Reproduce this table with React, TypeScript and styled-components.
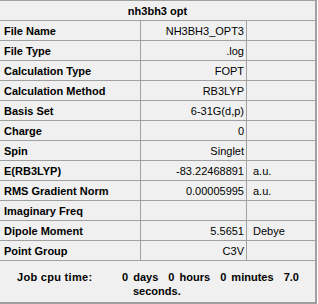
import React from 'react';
import styled, { createGlobalStyle } from 'styled-components';

const GlobalStyle = createGlobalStyle`
  html, body {
    margin: 0;
    padding: 0;
    background: #ffffff;
  }
  body {
    font-family: "Liberation Sans", Arial, sans-serif;
    font-size: 11px;
    color: #000000;
  }
`;

const Panel = styled.div`
  width: 317px;
  height: 304px;
  box-sizing: border-box;
  background: #f0f0f0;
  border-top: 1px solid #a0a0a0;
  border-right: 2px solid #a0a0a0;
  border-bottom: 2px solid #a0a0a0;
  display: flex;
  flex-direction: column;
`;

const Title = styled.div`
  height: 19px;
  border-bottom: 1px solid #a0a0a0;
  display: flex;
  align-items: center;
  justify-content: center;
  font-weight: bold;
`;

const Row = styled.div`
  display: grid;
  grid-template-columns: 141px 106px 1fr;
  height: 20px;
  box-sizing: border-box;
  border-bottom: 1px solid #a0a0a0;
`;

const Cell = styled.div<{ $align?: 'left' | 'right'; $bold?: boolean; $last?: boolean }>`
  display: flex;
  align-items: center;
  justify-content: ${(p) => (p.$align === 'right' ? 'flex-end' : 'flex-start')};
  padding: ${(p) => (p.$align === 'right' ? '0 2px 0 0' : p.$bold ? '0 0 0 4px' : '0 0 0 6px')};
  font-weight: ${(p) => (p.$bold ? 'bold' : 'normal')};
  border-right: ${(p) => (p.$last ? 'none' : '1px solid #a0a0a0')};
  white-space: nowrap;
  overflow: hidden;
`;

const Footer = styled.div`
  flex: 1;
  display: flex;
  font-weight: bold;
  padding-top: 9px;
  line-height: 14px;
`;

const FooterLabel = styled.div`
  width: 122px;
  padding-left: 17px;
  box-sizing: border-box;
  letter-spacing: 0.3px;
`;

const FooterValue = styled.div`
  display: flex;
  flex-direction: column;
  white-space: pre;
  word-spacing: 2px;
`;

const Wrapped = styled.span`
  padding-left: 11px;
`;

type Prop = { label: string; value: string; unit?: string };

const rows: Prop[] = [
  { label: 'File Name', value: 'NH3BH3_OPT3' },
  { label: 'File Type', value: '.log' },
  { label: 'Calculation Type', value: 'FOPT' },
  { label: 'Calculation Method', value: 'RB3LYP' },
  { label: 'Basis Set', value: '6-31G(d,p)' },
  { label: 'Charge', value: '0' },
  { label: 'Spin', value: 'Singlet' },
  { label: 'E(RB3LYP)', value: '-83.22468891', unit: 'a.u.' },
  { label: 'RMS Gradient Norm', value: '0.00005995', unit: 'a.u.' },
  { label: 'Imaginary Freq', value: '' },
  { label: 'Dipole Moment', value: '5.5651', unit: 'Debye' },
  { label: 'Point Group', value: 'C3V' },
];

export default function App() {
  return (
    <>
      <GlobalStyle />
      <Panel>
        <Title>nh3bh3 opt</Title>
        {rows.map((r) => (
          <Row key={r.label}>
            <Cell $bold>{r.label}</Cell>
            <Cell $align="right">{r.value}</Cell>
            <Cell $last>{r.unit ?? ''}</Cell>
          </Row>
        ))}
        <Footer>
          <FooterLabel>Job cpu time:</FooterLabel>
          <FooterValue>
            <span>{'0 days  0 hours  0 minutes  7.0'}</span>
            <Wrapped>seconds.</Wrapped>
          </FooterValue>
        </Footer>
      </Panel>
    </>
  );
}
